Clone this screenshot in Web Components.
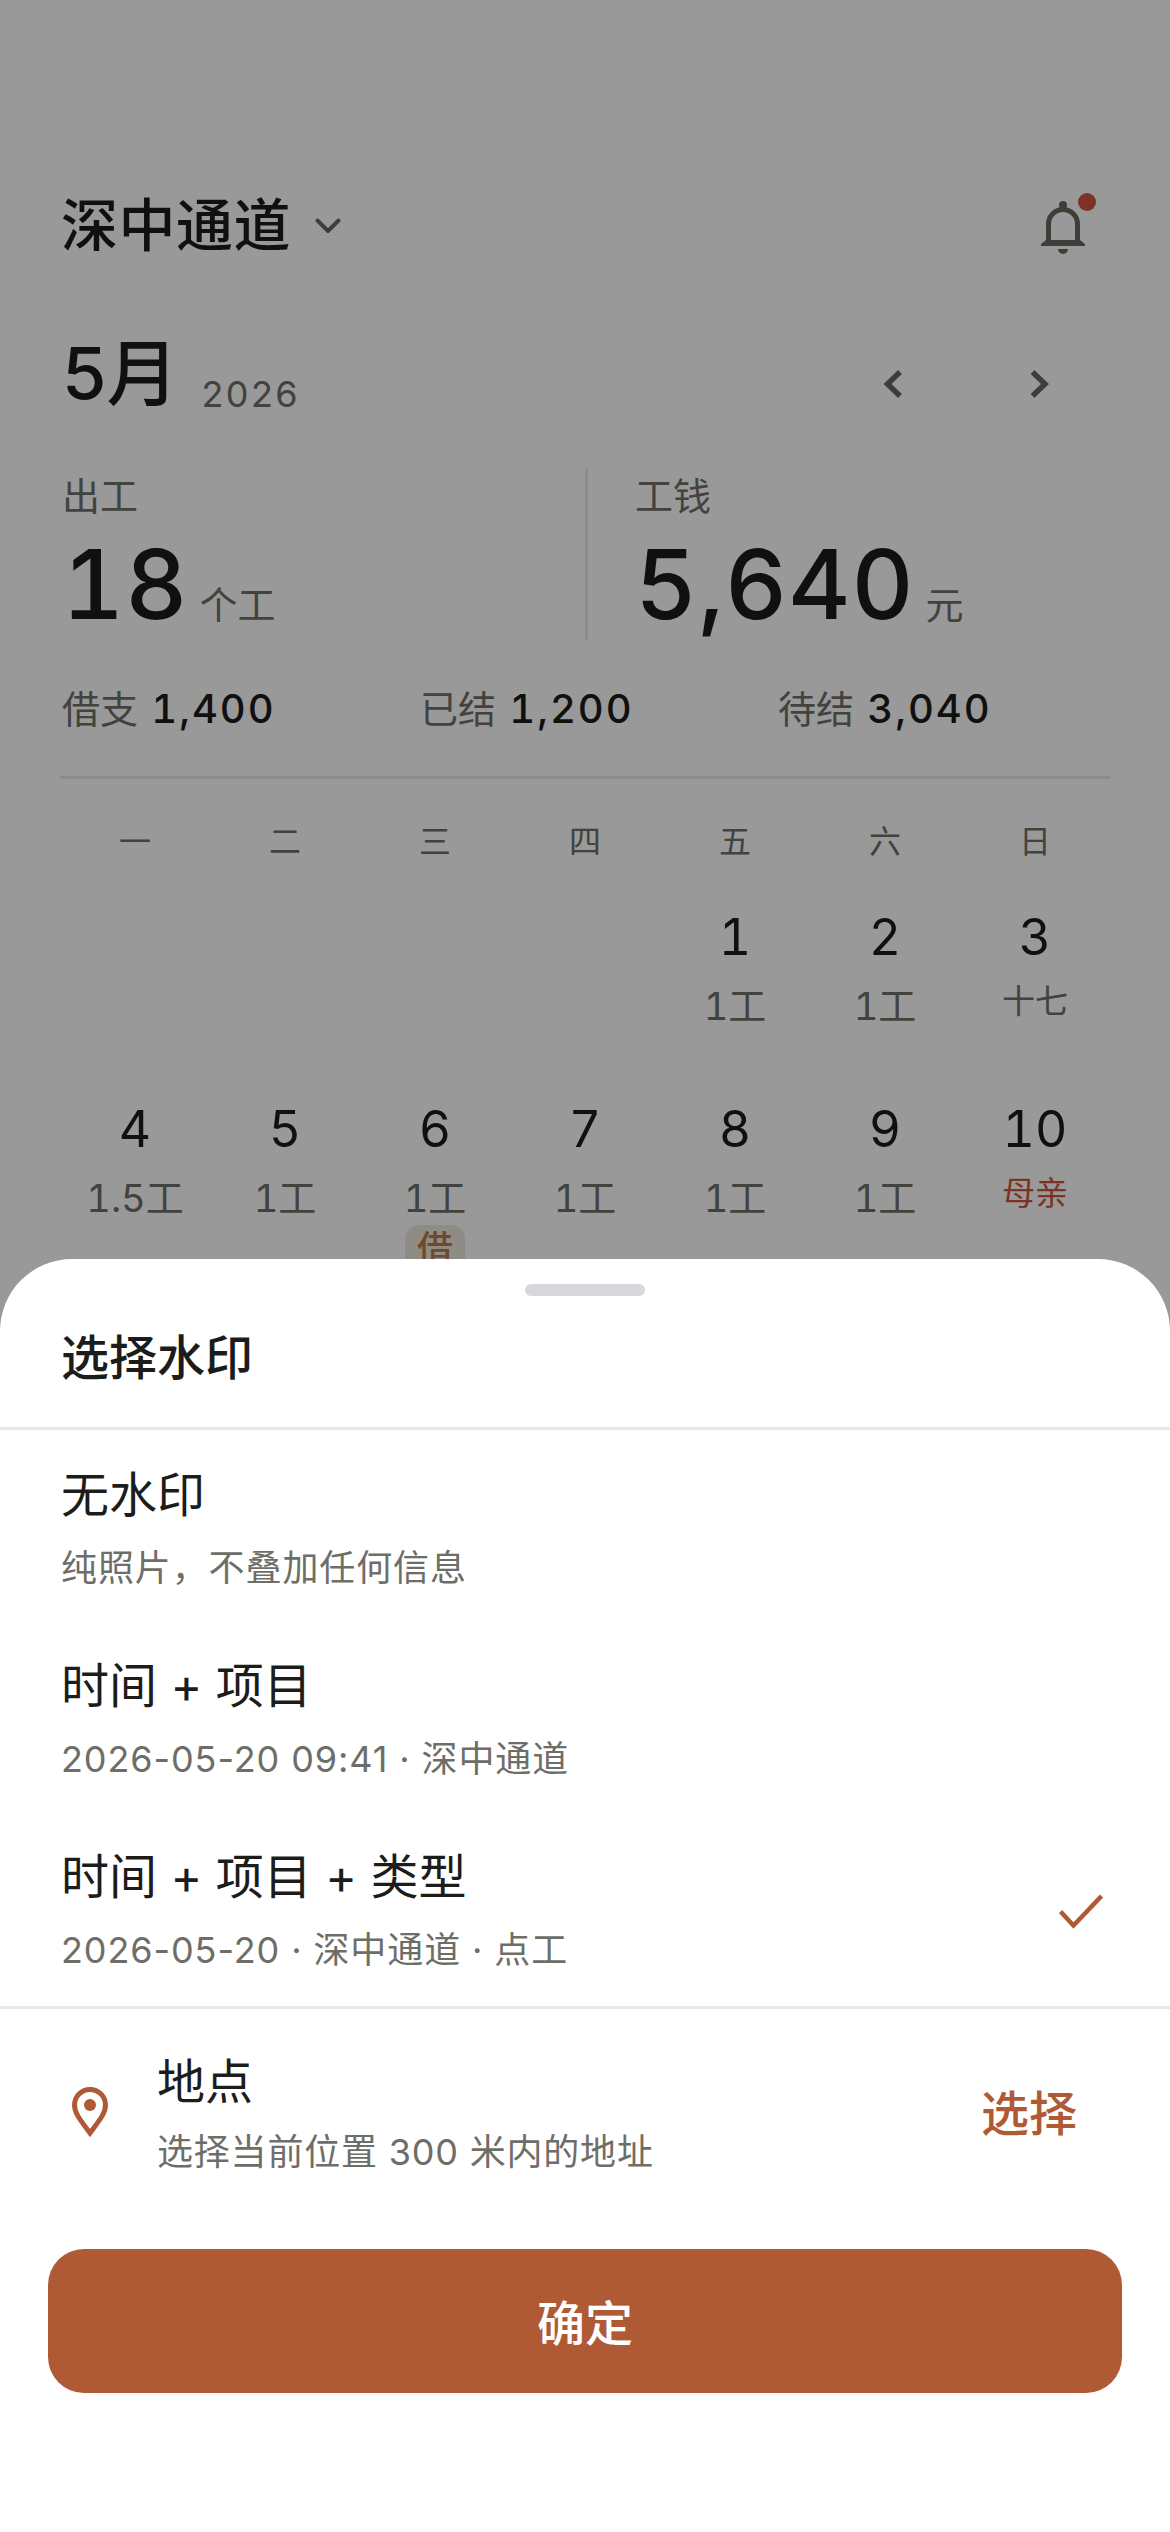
<!DOCTYPE html>
<html lang="zh-CN">
<head>
<meta charset="utf-8">
<title>选择水印</title>
<style>
html, body { margin: 0; padding: 0; }
body {
    width: 1170px;
    height: 2532px;
    overflow: hidden;
    position: relative;
    background: #fff;
    color: #1c1c1a;
    font-family: Inter, "Noto Sans CJK SC", sans-serif;
}
</style>
</head>
<body>
<work-page>
    <project-header name="深中通道"></project-header>
    <month-nav month="5月" year="2026"></month-nav>
    <pay-summary></pay-summary>
    <work-calendar></work-calendar>
</work-page>
<sheet-scrim></sheet-scrim>
<bottom-sheet heading="选择水印">
    <mark-option title="无水印" sub="纯照片，不叠加任何信息"></mark-option>
    <mark-option title="时间 + 项目" sub="2026-05-20 09:41 · 深中通道"></mark-option>
    <mark-option title="时间 + 项目 + 类型" sub="2026-05-20 · 深中通道 · 点工" selected></mark-option>
    <place-row slot="footer"></place-row>
    <primary-button slot="footer">确定</primary-button>
</bottom-sheet>

<script>
class WorkPage extends HTMLElement {
    constructor() {
        super();
        this.attachShadow({mode: 'open'});
        this.shadowRoot.innerHTML = `
            <style>
                :host { display: block; padding: 190px 60px 0; }
            </style>
            <slot></slot>`;
    }
}

class ProjectHeader extends HTMLElement {
    connectedCallback() {
        this.attachShadow({mode: 'open'});
        this.shadowRoot.innerHTML = `
            <style>
                :host { display: flex; align-items: center; height: 72px; padding-left: 1px; }
                .name { font-size: 57px; font-weight: 550; line-height: 72px; letter-spacing: .5px; }
                .caret { margin-left: 23px; }
                .bell { margin-left: auto; margin-right: 11px; margin-top: 3px; width: 72px; height: 72px; }
            </style>
            <span class="name">${this.getAttribute('name')}</span>
            <svg class="caret" width="28" height="28" viewBox="0 0 28 28" fill="none" stroke="#686860" stroke-width="4" stroke-linecap="round" stroke-linejoin="round"><path d="M3.5 8.5L14 19 24.5 8.5"/></svg>
            <svg class="bell" viewBox="0 0 72 72">
                <path d="M21.5 50V32a14.5 14.5 0 0 1 29 0v18" fill="none" stroke="#686860" stroke-width="5"/>
                <circle cx="36" cy="13" r="4" fill="#686860"/>
                <path d="M19 48l-5 4v2h44v-2l-5-4z" fill="#686860"/>
                <path d="M31 57h10a5 5 0 0 1-10 0z" fill="#686860"/>
                <circle cx="60" cy="10" r="9" fill="#d3533f"/>
            </svg>`;
    }
}

class MonthNav extends HTMLElement {
    connectedCallback() {
        this.attachShadow({mode: 'open'});
        this.shadowRoot.innerHTML = `
            <style>
                :host { display: flex; align-items: flex-end; height: 80px; margin-top: 74px; padding-left: 2px; }
                .month { font-size: 72px; font-weight: 550; line-height: 80px; margin-bottom: 3px; }
                .year { font-size: 36px; line-height: 48px; color: #6e6e68; letter-spacing: 2.4px; margin-left: 23px; margin-bottom: -2px; }
                .arrows { margin-left: auto; margin-right: 60px; display: flex; gap: 120px; align-self: center; padding-top: 16px; }
            </style>
            <span class="month">${this.getAttribute('month')}</span>
            <span class="year">${this.getAttribute('year')}</span>
            <div class="arrows">
                <svg width="24" height="36" viewBox="0 0 24 36" fill="none" stroke="#686860" stroke-width="5.5"><path d="M18 6L5.5 18 18 30"/></svg>
                <svg width="24" height="36" viewBox="0 0 24 36" fill="none" stroke="#686860" stroke-width="5.5"><path d="M6.5 6L19 18 6.5 30"/></svg>
            </div>`;
    }
}

class PaySummary extends HTMLElement {
    connectedCallback() {
        this.attachShadow({mode: 'open'});
        const stat = (label, value) => `<div class="stat"><span class="k">${label}</span> <span class="v">${value}</span></div>`;
        this.shadowRoot.innerHTML = `
            <style>
                :host { display: block; margin-top: 52px; padding-left: 2px; font-variant-numeric: tabular-nums; }
                .top { display: grid; grid-template-columns: 523px 1fr; }
                .col { height: 172px; }
                .col + .col { border-left: 3px solid #ebe9e3; padding-left: 47px; }
                .label { font-size: 38px; line-height: 48px; color: #6e6e68; padding-top: 4px; }
                .value { display: flex; align-items: baseline; font-size: 96px; font-weight: 500; line-height: 112px; letter-spacing: 1px; margin-top: 8px; }
                .unit { font-size: 38px; font-weight: 400; color: #6e6e68; letter-spacing: 0; margin-left: 11px; }
                .stats { display: grid; grid-template-columns: repeat(3, 358px); margin-top: 45px; font-size: 38px; line-height: 48px; }
                .k { color: #6e6e68; }
                .v { font-size: 40px; font-weight: 500; letter-spacing: 2px; margin-left: 3px; color: #1c1c1a; }
            </style>
            <div class="top">
                <div class="col">
                    <div class="label">出工</div>
                    <div class="value">18<span class="unit">个工</span></div>
                </div>
                <div class="col">
                    <div class="label">工钱</div>
                    <div class="value">5,640<span class="unit">元</span></div>
                </div>
            </div>
            <div class="stats">
                ${stat('借支', '1,400')}${stat('已结', '1,200')}${stat('待结', '3,040')}
            </div>`;
    }
}

class DayCell extends HTMLElement {
    connectedCallback() {
        this.attachShadow({mode: 'open'});
        const sub = this.getAttribute('sub') || '';
        const kind = this.getAttribute('kind') || '';
        const badge = this.getAttribute('badge');
        this.shadowRoot.innerHTML = `
            <style>
                :host { display: flex; flex-direction: column; align-items: center; height: 192px; font-variant-numeric: tabular-nums; }
                .num { font-size: 50px; line-height: 64px; color: #1c1c1a; }
                .sub { font-size: 38px; line-height: 48px; margin-top: 13px; color: #6e6e68; white-space: nowrap; }
                .sub.lunar { font-size: 33px; margin-top: 8px; }
                .sub.fest { font-size: 33px; margin-top: 8px; color: #d3533f; }
                .badge { font-size: 36px; line-height: 48px; width: 60px; text-align: center; border-radius: 14px; background: #eeeade; color: #b87a47; font-weight: 500; margin-top: 3px; }
            </style>
            <span class="num">${this.getAttribute('num')}</span>
            <span class="sub ${kind}">${sub}</span>
            ${badge ? `<span class="badge">${badge}</span>` : ''}`;
    }
}

class WorkCalendar extends HTMLElement {
    connectedCallback() {
        this.attachShadow({mode: 'open'});
        const week = ['一', '二', '三', '四', '五', '六', '日'];
        const days = [
            ['1', '1工'], ['2', '1工'], ['3', '十七', 'lunar'],
            ['4', '1.5工'], ['5', '1工'], ['6', '1工', '', '借'], ['7', '1工'], ['8', '1工'], ['9', '1工'], ['10', '母亲', 'fest']
        ];
        const cells = days.map(([num, sub, kind, badge]) =>
            `<day-cell num="${num}" sub="${sub}" kind="${kind || ''}"${badge ? ` badge="${badge}"` : ''}></day-cell>`).join('');
        this.shadowRoot.innerHTML = `
            <style>
                :host { display: block; border-top: 3px solid #ebe9e3; margin-top: 43px; }
                .grid { display: grid; grid-template-columns: repeat(7, 150px); }
                .week { font-size: 32px; line-height: 44px; color: #6e6e68; text-align: center; padding: 41px 0 41px; }
                .blank { grid-column: span 4; }
            </style>
            <div class="grid">
                ${week.map(w => `<div class="week">${w}</div>`).join('')}
                <div class="blank"></div>
                ${cells}
            </div>`;
    }
}

// scrim and sheet lie over the page, so these two are positioned
class SheetScrim extends HTMLElement {
    constructor() {
        super();
        this.attachShadow({mode: 'open'});
        this.shadowRoot.innerHTML = `
            <style>
                :host { display: block; position: absolute; inset: 0; background: rgba(0, 0, 0, .4); }
            </style>`;
    }
}

class BottomSheet extends HTMLElement {
    connectedCallback() {
        this.attachShadow({mode: 'open'});
        this.shadowRoot.innerHTML = `
            <style>
                :host { display: block; position: absolute; left: 0; right: 0; bottom: 0; height: 1273px; background: #fff; border-radius: 72px 72px 0 0; }
                .handle { width: 120px; height: 12px; border-radius: 6px; background: #d6d8dc; margin: 25px auto 0; }
                h2 { margin: 0; padding: 30px 61px 0; font-size: 48px; font-weight: 550; line-height: 64px; height: 101px; border-bottom: 3px solid #e8e8e4; color: #1c1c1a; }
                .options { border-bottom: 3px solid #e8e8e4; height: 576px; }
            </style>
            <div class="handle"></div>
            <h2>${this.getAttribute('heading')}</h2>
            <div class="options"><slot></slot></div>
            <slot name="footer"></slot>`;
    }
}

class MarkOption extends HTMLElement {
    connectedCallback() {
        this.attachShadow({mode: 'open'});
        const selected = this.hasAttribute('selected');
        this.shadowRoot.innerHTML = `
            <style>
                :host { display: flex; align-items: center; height: 191px; padding: 0 62px 0 61px; }
                .text { flex: 1; padding-top: 3px; }
                .title { font-size: 48px; line-height: 64px; color: #1c1c1a; }
                .sub { font-size: 36px; line-height: 48px; margin-top: 17px; color: #6e6e68; letter-spacing: .9px; }
                svg { margin: 6px 5px 0 0; }
            </style>
            <div class="text">
                <div class="title">${this.getAttribute('title')}</div>
                <div class="sub">${this.getAttribute('sub')}</div>
            </div>
            ${selected ? `<svg width="44" height="36" viewBox="0 0 44 36" fill="none" stroke="#b05a35" stroke-width="4.5"><path d="M1.5 18.5L14.5 32.5 42.5 3"/></svg>` : ''}`;
    }
}

class PlaceRow extends HTMLElement {
    connectedCallback() {
        this.attachShadow({mode: 'open'});
        this.shadowRoot.innerHTML = `
            <style>
                :host { display: flex; align-items: center; height: 204px; padding: 0 93px 0 62px; }
                svg { width: 56px; height: 56px; margin-right: 39px; }
                .text { flex: 1; padding-top: 4px; }
                .title { font-size: 48px; line-height: 64px; color: #1c1c1a; }
                .sub { font-size: 36px; line-height: 48px; margin-top: 14px; color: #6e6e68; letter-spacing: .8px; }
                .pick { font-size: 48px; font-weight: 500; color: #b05a35; margin-top: -2px; }
            </style>
            <svg viewBox="0 0 56 56">
                <path d="M28 50C20 39 12.5 31 12.5 22a15.5 15.5 0 0 1 31 0c0 9-7.5 17-15.5 28z" fill="none" stroke="#b05a35" stroke-width="5"/>
                <circle cx="28" cy="22" r="6" fill="#b05a35"/>
            </svg>
            <div class="text">
                <div class="title">地点</div>
                <div class="sub">选择当前位置 300 米内的地址</div>
            </div>
            <span class="pick">选择</span>`;
    }
}

class PrimaryButton extends HTMLElement {
    constructor() {
        super();
        this.attachShadow({mode: 'open'});
        this.shadowRoot.innerHTML = `
            <style>
                :host { display: flex; align-items: center; justify-content: center; height: 144px; margin: 36px 48px 0; border-radius: 36px; background: #b05a35; color: #fff; font-size: 48px; font-weight: 500; padding-bottom: 2px; box-sizing: border-box; }
            </style>
            <slot></slot>`;
    }
}

customElements.define('work-page', WorkPage);
customElements.define('project-header', ProjectHeader);
customElements.define('month-nav', MonthNav);
customElements.define('pay-summary', PaySummary);
customElements.define('day-cell', DayCell);
customElements.define('work-calendar', WorkCalendar);
customElements.define('sheet-scrim', SheetScrim);
customElements.define('bottom-sheet', BottomSheet);
customElements.define('mark-option', MarkOption);
customElements.define('place-row', PlaceRow);
customElements.define('primary-button', PrimaryButton);
</script>
</body>
</html>
